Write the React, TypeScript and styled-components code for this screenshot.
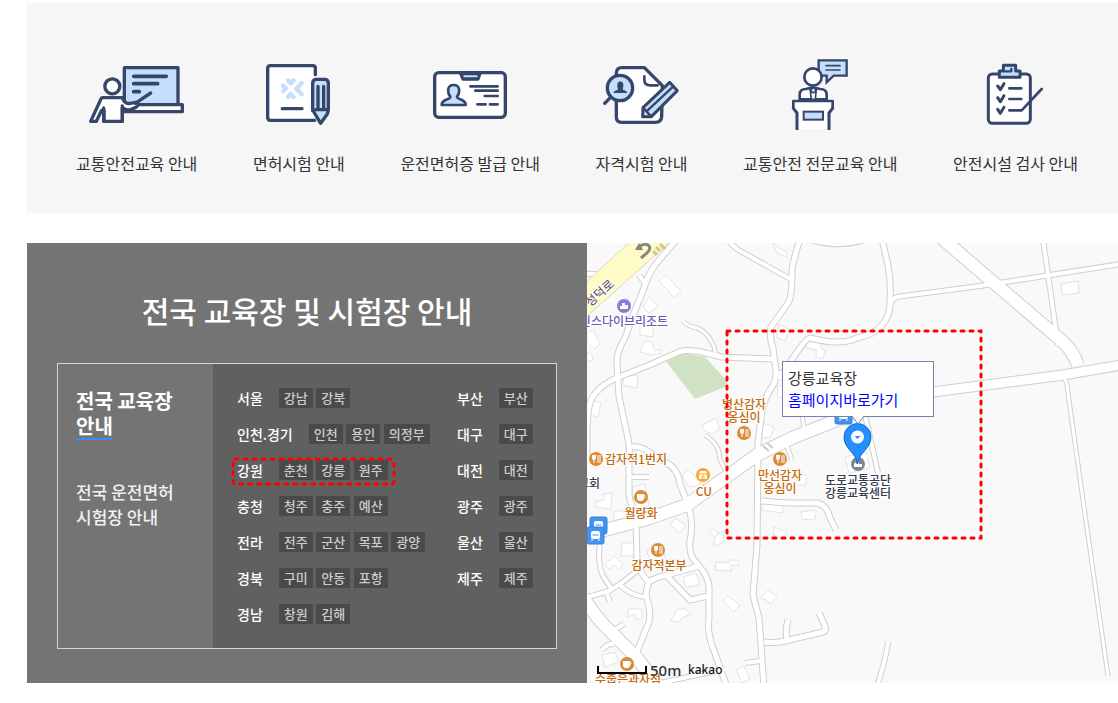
import React from 'react';
import styled, { createGlobalStyle } from 'styled-components';

const GlobalStyle = createGlobalStyle`
  *, *::before, *::after { box-sizing: border-box; }
  body {
    margin: 0;
    background: #fff;
    color: #333;
    font-family: 'Noto Sans CJK KR', 'Noto Sans', sans-serif;
    font-size: 16px;
  }
  ul { list-style: none; margin: 0; padding: 0; }
  a { color: inherit; text-decoration: none; }
`;

const NAVY = '#36456a' as const;
const SKY = '#c4dffc' as const;

const Page = styled.main`
  padding: 3px 0 20px 27px;
`;

/* ---------- service shortcuts ---------- */

const Shortcuts = styled.nav`
  background: #f6f6f6;
  padding: 54px 40px 38px 49px;
`;

const ShortcutList = styled.ul`
  display: flex;
  justify-content: space-between;
`;

const ShortcutLink = styled.a`
  display: flex;
  flex-direction: column;
  align-items: center;
  gap: 18px;
  line-height: 24px;
  white-space: nowrap;
`;

const IconSlot = styled.svg`
  width: 96px;
  height: 76px;
  margin: 0 -12px;
  fill: none;
  stroke: ${NAVY};
  stroke-width: 10;
  stroke-linecap: round;
  stroke-linejoin: round;
`;

const LectureIcon = () => (
  <IconSlot viewBox="87 51 288 228" aria-hidden="true">
    <rect x="193" y="83" width="161" height="112" fill={SKY} />
    <path d="M190 194H367V215H190z" fill="#fff" />
    <path d="M221 109H319M221 131H293M221 155H238" strokeWidth="11" />
    <circle cx="157" cy="139" r="22.500" fill="#fff" />
    <path d="M128 173H187C192 188 200 192 211 190L226 187C238 186 236 198 226 203L211 209C202 212 194 208 187 203V244H132V211H125L109 244H92L122 179Q124 173 128 173Z" fill="#fff" />
    <path d="M131 204V244M187 198V244M226 190L272 159" />
  </IconSlot>
);

const ExamIcon = () => (
  <IconSlot viewBox="573 51 288 228" aria-hidden="true">
    <path d="M766 104V84Q766 77 758 77H631Q623 77 623 86V232Q623 241 631 241H766L758 210V120Z" fill="#fff" stroke="none" />
    <path d="M766 104V84Q766 77 758 77H631Q623 77 623 86V232Q623 241 631 241H764" />
    <g stroke={SKY} strokeWidth="13">
      <path d="M684 121L692 130L701 121M669 137L678 145L669 154M684 171L692 162L701 171" />
      <path d="M725 129L709 146L725 163" />
    </g>
    <path d="M667 206H726" />
    <path d="M758 212V130Q758 118 770 118H794Q805 118 805 130V210L802 222L782 250L758 210" fill={SKY} />
    <path d="M774 139V209M791 139V209M767 209H799" />
  </IconSlot>
);

const LicenseIcon = () => (
  <IconSlot viewBox="126 51 288 228" aria-hidden="true">
    <rect x="164" y="98" width="212" height="134" rx="12" fill="#fff" />
    <path d="M242 100L249 117H294L300 100Z" fill={NAVY} />
    <path d="M253 109H290" stroke={SKY} strokeWidth="6" />
    <path d="M211 170C202 159 200 135 221 135C242 135 240 159 231 170C230 180 258 175 257 195H185C184 175 213 180 211 170Z" fill={SKY} strokeWidth="8" />
    <path d="M271 139H353M286 152H353M314 168H353M292 193H317M330 193H353" strokeWidth="8" />
  </IconSlot>
);

const QualificationIcon = () => (
  <IconSlot viewBox="641 51 288 228" aria-hidden="true">
    <path d="M708 101Q708 83 724 83H792L846 137L844 229Q843 247 825 247H724Q708 247 708 231Z" fill="#fff" />
    <path d="M792 109V119Q792 136 810 136H832" strokeWidth="8" />
    <circle cx="719" cy="144" r="38" fill={SKY} />
    <path d="M690 173L673 190" />
    <path d="M699 159Q701 151 713 149Q706 125 720 124Q734 125 727 149Q739 151 741 159Z" fill={NAVY} stroke="none" />
    <path d="M788 203L868 127L891 152L813 230H787Z" fill={SKY} strokeWidth="9" />
    <path d="M801 212L879 139M788 203L813 230" strokeWidth="7" />
  </IconSlot>
);

const LecternIcon = () => (
  <IconSlot viewBox="156 51 288 228" aria-hidden="true">
    <path d="M296 61H380V107H341L320 127V107H296Z" fill={SKY} strokeWidth="7" strokeLinejoin="miter" />
    <path d="M318 77H360M318 90H360" strokeWidth="5" />
    <circle cx="279" cy="111" r="26" fill="#fff" strokeWidth="8" />
    <path d="M239 178V164Q239 147 258 147L279 142L300 147Q320 147 320 164V178Z" fill="#fff" strokeWidth="8" />
    <path d="M270 146L274 178H286L289 146Z" fill="#fff" strokeWidth="5" />
    <circle cx="280" cy="151" r="7" fill={SKY} strokeWidth="5" />
    <path d="M220 183H338V201L330 210V266H232V210L220 201Z" fill="#fff" stroke="none" />
    <path d="M220 183H338V202M220 183V202" strokeWidth="8" />
    <path d="M218 202L231 219V270M340 202L327 219V270" strokeWidth="9" strokeLinecap="butt" />
    <rect x="251" y="215" width="58" height="24" fill={SKY} strokeWidth="6" strokeLinejoin="miter" />
  </IconSlot>
);

const InspectionIcon = () => (
  <IconSlot viewBox="741 51 288 228" aria-hidden="true">
    <rect x="805" y="102" width="126" height="148" rx="12" fill="#fff" strokeWidth="9" />
    <path d="M838 93H850V76H887V93H900V112H838Z" fill={SKY} strokeWidth="9" />
    <path d="M854 94H874V87" strokeWidth="7" />
    <path d="M833 138L841 149L852 131M833 173L841 185L852 167M833 208L841 220L852 202" strokeWidth="9" />
    <path d="M868 145H904M868 177H904M868 211H905L965 147" strokeWidth="8" />
  </IconSlot>
);

const shortcuts = [
  { label: '교통안전교육 안내', Icon: LectureIcon },
  { label: '면허시험 안내', Icon: ExamIcon },
  { label: '운전면허증 발급 안내', Icon: LicenseIcon },
  { label: '자격시험 안내', Icon: QualificationIcon },
  { label: '교통안전 전문교육 안내', Icon: LecternIcon },
  { label: '안전시설 검사 안내', Icon: InspectionIcon },
];

/* ---------- venue directory ---------- */

const Venues = styled.section`
  display: flex;
  margin-top: 30px;
`;

const Directory = styled.div`
  flex: 0 0 560px;
  padding: 45px 30px 34px;
  background: #747474;
  color: #fff;
`;

const DirectoryTitle = styled.h2`
  margin: 0 0 31px;
  font-size: 30px;
  font-weight: 500;
  line-height: 44px;
  text-align: center;
`;

const DirectoryPanel = styled.div`
  display: flex;
  border: 1px solid #d0d4e0;
`;

const TabColumn = styled.div`
  flex: 0 0 155px;
  display: flex;
  flex-direction: column;
  align-items: flex-start;
  gap: 39px;
  padding: 24px 18px;
`;

const Tab = styled.button<{ $active?: boolean }>`
  padding: 0;
  border: 0;
  background: none;
  font-family: inherit;
  text-align: left;
  line-height: 25px;
  color: ${p => (p.$active ? '#fff' : '#f0f0f0')};
  font-size: ${p => (p.$active ? '20px' : '17px')};
  font-weight: ${p => (p.$active ? 700 : 500)};
`;

const TabUnderline = styled.span`
  display: inline-block;
  border-bottom: 2px solid #3a8fe8;
`;

const RegionArea = styled.div`
  flex: 1;
  display: grid;
  grid-template-columns: 220px 1fr;
  padding: 24px 0 24px 24px;
  background: #606060;
`;

const RegionColumn = styled.ul`
  display: flex;
  flex-direction: column;
  gap: 16px;
`;

const RegionRow = styled.li`
  position: relative;
  display: flex;
  gap: 16px;
  height: 20px;
  white-space: nowrap;
`;

const RegionName = styled.strong`
  font-size: 14px;
  font-weight: 500;
  line-height: 20px;
`;

const Chips = styled.div`
  height: 20px;
  line-height: 20px;
`;

const Chip = styled.a`
  display: inline-block;
  vertical-align: top;
  padding: 0 5px;
  background: #4a4a4a;
  color: #ccc;
  font-size: 13px;
  font-weight: 500;
  line-height: 20px;
`;

const RowHighlight = styled.svg`
  position: absolute;
  left: -8px;
  top: -4px;
  width: 168px;
  height: 34px;
  pointer-events: none;
`;

type Region = { name: string; places: string[]; highlighted?: boolean };

const mainRegions: Region[] = [
  { name: '서울', places: ['강남', '강북'] },
  { name: '인천.경기', places: ['인천', '용인', '의정부'] },
  { name: '강원', places: ['춘천', '강릉', '원주'], highlighted: true },
  { name: '충청', places: ['청주', '충주', '예산'] },
  { name: '전라', places: ['전주', '군산', '목포', '광양'] },
  { name: '경북', places: ['구미', '안동', '포항'] },
  { name: '경남', places: ['창원', '김해'] },
];

const cityRegions: Region[] = ['부산', '대구', '대전', '광주', '울산', '제주'].map(name => ({
  name,
  places: [name],
}));

const RegionList = ({ regions }: { regions: Region[] }) => (
  <RegionColumn>
    {regions.map(region => (
      <RegionRow key={region.name}>
        <RegionName>{region.name}</RegionName>
        <Chips>
          {region.places.map(place => (
            <React.Fragment key={place}>
              <Chip href="#">{place}</Chip>{' '}
            </React.Fragment>
          ))}
        </Chips>
        {region.highlighted && (
          <RowHighlight aria-hidden="true">
            <rect x="4" y="3" width="161" height="25" rx="2" fill="none" stroke="#f00" strokeWidth="3" strokeLinecap="round" strokeDasharray="3 6" />
          </RowHighlight>
        )}
      </RegionRow>
    ))}
  </RegionColumn>
);

/* ---------- map ---------- */

const MapCanvas = styled.div`
  position: relative;
  flex: 1;
  min-width: 0;
  overflow: hidden;
  background: #f9f9f9;
`;

const MapDrawing = styled.svg`
  position: absolute;
  inset: 0;
  width: 100%;
  height: 100%;
`;

const labelColors = { food: '#c26a0b', leisure: '#6a5bb8', place: '#333a4a', road: '#666' };

const MapLabel = styled.span<{ $x: number; $y: number; $kind: keyof typeof labelColors; $tilt?: number }>`
  position: absolute;
  left: ${p => p.$x}px;
  top: ${p => p.$y}px;
  transform: translate(-50%, -50%) rotate(${p => p.$tilt ?? 0}deg);
  color: ${p => labelColors[p.$kind]};
  font-size: 12px;
  font-weight: 500;
  line-height: 13px;
  text-align: center;
  white-space: pre;
  text-shadow: 1px 0 #fff, -1px 0 #fff, 0 1px #fff, 0 -1px #fff, 1px 1px #fff, -1px -1px #fff, 1px -1px #fff, -1px 1px #fff;
`;

const InfoWindow = styled.div`
  position: absolute;
  left: 195px;
  top: 118px;
  width: 152px;
  padding: 5px;
  border: 1px solid #7483ab;
  background: #fff;
  font-size: 15px;
  line-height: 22px;
`;

const InfoLink = styled.a`
  display: block;
  color: #00f;
`;

const InfoName = styled.div`
  color: #333;
`;

const ScaleText = styled.span`
  position: absolute;
  left: 63px;
  top: 417px;
  font-family: 'Noto Sans', sans-serif;
  font-size: 15px;
  font-weight: 500;
  line-height: 20px;
  color: #333;
`;

const MapBrand = styled.span`
  position: absolute;
  left: 101px;
  top: 418px;
  font-family: 'Noto Sans', sans-serif;
  font-size: 12px;
  font-weight: 500;
  line-height: 18px;
  color: #111;
`;

const roads: [number, string][] = [
  [5, 'M90 -4L68 22Q60 34 57 45L45 75L38 95Q29 110 30 120L32 154L41 195Q43 205 42 215V250Q42 258 47 266'],
  [5, 'M0 215V190Q0 160 7 152Q16 140 32 134L60 123L92 109Q97 106 115 109L135 114L186 116'],
  [3, 'M96 78Q101 84 111 85Q120 90 124 98Q129 105 128 113'],
  [5, 'M213 -4Q204 25 205 30Q205 55 201 60L184 84Q182 95 186 105L189 128Q190 138 183 147Q176 160 175 167L171 200L170 302L166 352L172 375L177 444'],
  [12, 'M351 -8L475 98Q486 108 491 122'],
  [9, 'M260 163L346 149L476 132L540 121'],
  [12, 'M14 288L60 276L100 262L170 212L205 195L250 177L280 162'],
  [5, 'M295 -4L301 22Q304 40 303 57Q304 72 295 82C288 92 275 93 265 97Q250 102 223 95Q219 95 204 118L192 136'],
  [4, 'M303 62Q304 54 316 53L393 43L540 20'],
  [4, 'M456 -4L471 102'],
  [3, 'M477 134Q481 142 481 150L496 257L521 433'],
  [4, 'M301 399Q300 411 290 444'],
  [5, 'M177 399Q192 401 206 396L236 389Q240 388 238 383L232 370M200 397Q198 388 201 377'],
  [4, 'M141 -4Q146 5 157 10L205 37'],
  [4, 'M0 31Q10 30 16 34M52 32L59 42'],
  [3, 'M118 192Q130 200 132 209Q132 219 139 227'],
  [5, 'M43 204Q54 203 62 209L78 219Q91 225 93 241L101 262Q106 276 104 292Q101 305 105 314L113 324Q122 335 122 345V375Q120 390 126 405L140 444'],
  [4, 'M42 234H62'],
  [4, 'M13 292V299Q10 320 16 333L24 345'],
  [4, 'M-2 355L22 348L33 341L50 328M33 342Q43 352 57 354'],
  [5, 'M49 276L50 319Q54 332 62 339Q57 350 61 360Q64 368 62 379L49 411'],
  [5, 'M60 340Q69 334 80 332L112 323M80 333L103 357L121 353'],
  [12, 'M-4 354Q10 376 22 387L50 415L72 444'],
  [4, 'M15 407Q21 400 27 401M37 381L27 387M23 359L20 351'],
  [4, 'M158 420L174 418M73 440L138 426'],
  [5, 'M174 258L200 260L230 260Q240 262 243 275L249 287'],
  [3, 'M199 200L205 217'],
  [4, 'M278 172L291 230'],
  [3, 'M214 165L217 185M188 130L210 128'],
  [3, 'M223 -3Q247 6 276 -2'],
];

const buildings = [
  'M79 32L94 48L87 54L72 38z',
  'M62 54L71 63L62 70L56 64z M55 78H66V94L53 92V82z',
  'M57 99L64 98L68 108L73 106L74 110L64 112L53 109z',
  'M0 90L6 87L13 101L7 106L0 99z M0 109L5 112L6 117L0 119z',
  'M37 131L51 133L50 145L36 142z M5 157L14 160L11 174L3 172z',
  'M115 182L129 175L133 185L125 191L118 188z',
  'M95 232L101 227L114 240L108 244L101 243z',
  'M8 259L17 257V251L25 250L24 266L8 264z M45 244L58 241L62 263L48 267z',
  'M27 268H39V277H27z M83 282L88 275L99 282L93 290z',
  'M122 290L126 286L137 295L133 298z M35 300H47V313H34z',
  'M18 321L28 313L36 322L32 326L27 322L22 326z',
  'M59 307L75 303L79 318L65 321z M96 334L109 330L113 342L99 344z',
  'M129 292L137 288L136 300L126 303z M129 319L142 320L143 317L151 317V322H144V328L128 327z',
  'M41 366H55V376H48V371L41 374z M84 378L90 366L98 366L104 371L95 375L92 379z',
  'M136 358L141 353L153 362L147 369z M173 355L181 347L190 354L184 361L179 357z',
  'M15 412L28 409L32 419L18 424z M149 427L157 423L163 436L155 440z',
  'M192 81L203 87L198 98L189 94z M220 98L234 98V105L238 107L236 116L229 114V107L219 105z',
  'M474 41L491 38L492 50L475 52z M191 143H203V156L190 154z',
  'M176 180L187 184L183 195L173 194z M175 258L197 261L195 270L175 267z',
  'M214 269L229 267V271L227 277L215 276z M187 284L200 289L197 295L186 292z',
  'M186 0L192 5L200 9V14L190 10z M258 214L279 209L283 225L262 230z',
  'M211 232H219V242H208z M40 55L44 61L38 66L33 61z',
];

const forks: [number, number][] = [[157, 190], [9, 216], [193, 216], [71, 307]];
const cups: [number, number][] = [[54, 254], [40, 421]];

const BusStop = ({ x, y }: { x: number; y: number }) => (
  <g transform={`translate(${x} ${y})`}>
    <rect width="17" height="17" rx="2" fill="#4294f3" stroke="#3380dc" />
    <rect x="4" y="4" width="9" height="8" rx="2" fill="#fff" />
    <path d="M5 7H12V9H5zM5 12V14M12 12V14" fill="#4294f3" stroke="#fff" strokeWidth="1" />
  </g>
);

const VenueMap = () => (
  <MapCanvas role="region" aria-label="강릉교육장 지도">
    <MapDrawing aria-hidden="true">
      <path d="M78 117L97 110L118 114L140 138L140 143L108 156z" fill="#d1e2c4" />
      {buildings.map(d => (
        <path key={d} d={d} fill="#fff" stroke="#e3e3e3" />
      ))}
      <g fill="none" strokeLinejoin="round">
        {roads.map(([w, d]) => (
          <path key={d} d={d} stroke="#cfcfcf" strokeWidth={w + 2} />
        ))}
        {roads.map(([w, d]) => (
          <path key={d} d={d} stroke="#fff" strokeWidth={w} />
        ))}
      </g>
      <path d="M44 -2L84 -2L-2 75V40z" fill="#fffbc6" stroke="#d8d6bd" />
      <g stroke="#d6c58e" strokeWidth="3">
        <path d="M69 4L73 8M73 1L78 6M66 8L70 12" />
      </g>
      <path d="M54 15L60 10Q65 5 61 2Q57 0 52 4" fill="none" stroke="#858585" strokeWidth="3" />
      <path d="M48 7L56 7L52 0z" fill="#858585" />
      <path d="M176 203L182 208M180 200L186 205" stroke="#ccc" strokeWidth="2" />

      {forks.map(([x, y]) => (
        <g key={`${x}-${y}`} transform={`translate(${x} ${y})`}>
          <circle r="7" fill="#db8a35" />
          <path d="M-2 0V4M2 -4V4M4 -4V4" stroke="#fff" />
          <path d="M-4 -4H0V-1Q0 1 -2 1Q-4 1 -4 -1z" fill="#fff" />
        </g>
      ))}
      {cups.map(([x, y]) => (
        <g key={`${x}-${y}`} transform={`translate(${x} ${y})`}>
          <circle r="7" fill="#db8a35" />
          <path d="M-4 -3H3V1Q3 4 0 4H-1Q-4 4 -4 1z" fill="#fff" />
          <path d="M3 -2Q6 -1 3 1" fill="none" stroke="#fff" />
        </g>
      ))}
      <g transform="translate(116 232)">
        <circle r="7" fill="#f9a82b" />
        <path d="M-4 -1L-3 -4H3L4 -1V4H-4z" fill="#fff" />
        <path d="M-1 4V1H1V4M-4 -1H4" fill="none" stroke="#f9a82b" />
      </g>
      <g transform="translate(37 63)">
        <circle r="7" fill="#8b7bd4" />
        <path d="M-4 3V0H-2V-3H1V-1H4V3z" fill="#fff" />
      </g>
      <BusStop x={3} y={274} />
      <BusStop x={0} y={284} />
      <BusStop x={248} y={164} />

      <g transform="translate(271 221)">
        <circle r="7" fill="#7b8594" />
        <path d="M-4 3V0L-2 -2V0L1 -2V0H4V3z" fill="#fff" />
      </g>
      <path d="M270.500 221C269 209 257 206 257 194A13.500 13.500 0 0 1 284 194C284 206 272 209 270.500 221z" fill="#258fff" stroke="#1769c4" />
      <circle cx="270.500" cy="194" r="6.500" fill="#fff" />
      <path d="M267.500 193H273.500L270.500 196z" fill="#258fff" />
    </MapDrawing>

    <MapLabel $kind="road" $x={12} $y={49} $tilt={-42}>성덕로</MapLabel>
    <MapLabel $kind="leisure" $x={37} $y={77}>린스다이브리조트</MapLabel>
    <MapLabel $kind="food" $x={157} $y={167}>{'병산감자\n옹심이'}</MapLabel>
    <MapLabel $kind="food" $x={49} $y={215}>감자적1번지</MapLabel>
    <MapLabel $kind="food" $x={117} $y={247}>CU</MapLabel>
    <MapLabel $kind="place" $x={2} $y={239}>교회</MapLabel>
    <MapLabel $kind="food" $x={54} $y={269}>월량화</MapLabel>
    <MapLabel $kind="food" $x={72} $y={321}>감자적본부</MapLabel>
    <MapLabel $kind="food" $x={193} $y={238}>{'만선감자\n옹심이'}</MapLabel>
    <MapLabel $kind="food" $x={41} $y={435}>수줍은과자점</MapLabel>
    <MapLabel $kind="place" $x={271} $y={243}>{'도로교통공단\n강릉교육센터'}</MapLabel>

    <ScaleText>50m</ScaleText>
    <MapBrand>kakao</MapBrand>

    <InfoWindow>
      <InfoName>강릉교육장</InfoName>
      <InfoLink href="#">홈페이지바로가기</InfoLink>
    </InfoWindow>

    <MapDrawing aria-hidden="true" pointerEvents="none">
      <path d="M265 173L271 181L277 173" fill="#fff" stroke="#7483ab" />
      <path d="M11 423V430H59V423" fill="none" stroke="#000" strokeWidth="2" />
      <path
        d="M140 88H394V295H140Z"
        fill="none"
        stroke="#f00"
        strokeWidth="3"
        strokeLinecap="round"
        strokeDasharray="3 6"
      />
    </MapDrawing>
  </MapCanvas>
);

export default function App() {
  return (
    <>
      <GlobalStyle />
      <Page>
        <Shortcuts>
          <ShortcutList>
            {shortcuts.map(({ label, Icon }) => (
              <li key={label}>
                <ShortcutLink href="#">
                  <Icon />
                  {label}
                </ShortcutLink>
              </li>
            ))}
          </ShortcutList>
        </Shortcuts>

        <Venues>
          <Directory>
            <DirectoryTitle>전국 교육장 및 시험장 안내</DirectoryTitle>
            <DirectoryPanel>
              <TabColumn>
                <Tab type="button" $active>
                  전국 교육장
                  <br />
                  <TabUnderline>안내</TabUnderline>
                </Tab>
                <Tab type="button">
                  전국 운전면허
                  <br />
                  시험장 안내
                </Tab>
              </TabColumn>
              <RegionArea>
                <RegionList regions={mainRegions} />
                <RegionList regions={cityRegions} />
              </RegionArea>
            </DirectoryPanel>
          </Directory>
          <VenueMap />
        </Venues>
      </Page>
    </>
  );
}
